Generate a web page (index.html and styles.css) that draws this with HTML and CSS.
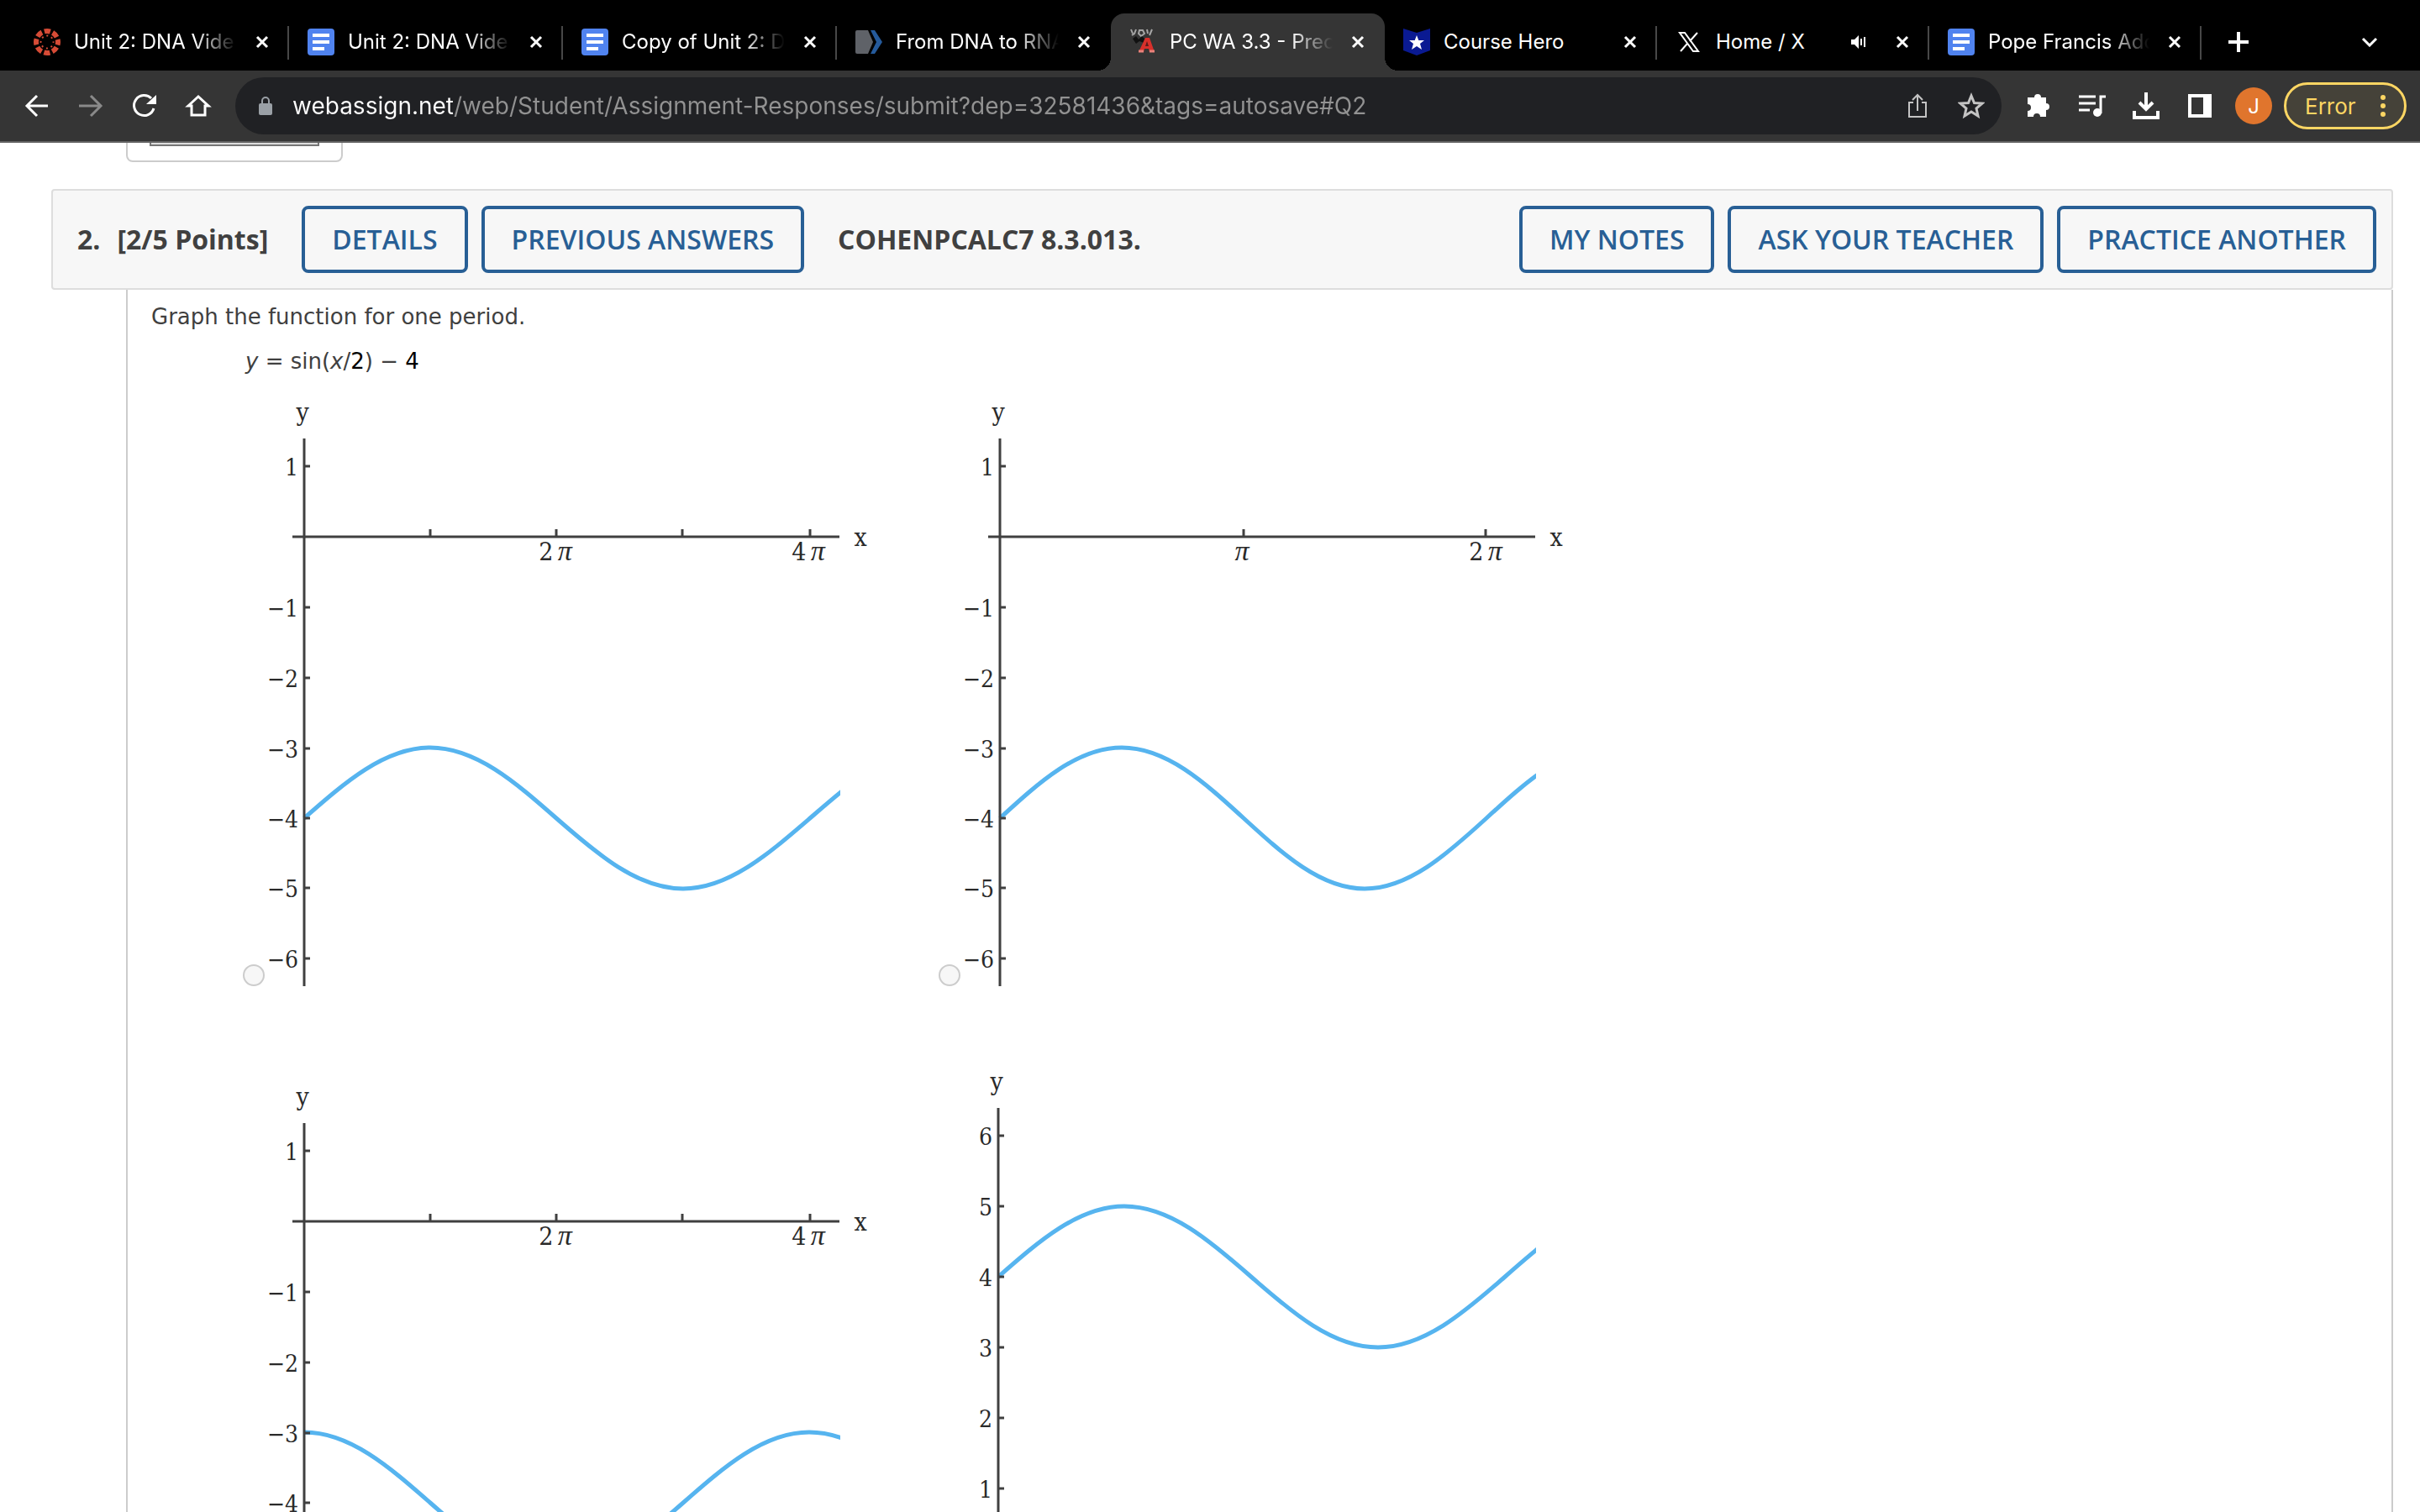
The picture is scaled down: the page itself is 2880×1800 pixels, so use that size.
FILE: index.html
```html
<!DOCTYPE html>
<html lang="en">
<head>
  <meta charset="UTF-8">
  <meta name="viewport" content="width=device-width, initial-scale=1.0">
  <title>PC WA 3.3 - Precalculus</title>
  <link rel="stylesheet" href="styles.css">
</head>
<body>
  <svg class="defs" aria-hidden="true">
    <symbol id="close" viewBox="0 0 16 16">
      <path d="M2 2L14 14M14 2L2 14" stroke="#fff" stroke-width="3" fill="none"/>
    </symbol>
    <symbol id="doc" viewBox="0 0 32 32">
      <rect width="32" height="32" rx="4" fill="#5083ef"/>
      <path d="M6 8H26M6 16H26M6 24H20" stroke="#fff" stroke-width="4"/>
    </symbol>
    <clipPath id="plotArea"><rect x="44" y="0" width="640" height="720"/></clipPath>
  </svg>

  <header class="browser">
    <nav class="tabs">
      <div class="tab">
        <svg class="favicon" viewBox="0 0 32 32">
          <circle cx="16" cy="16" r="13" fill="none" stroke="#d64b36" stroke-width="6" stroke-dasharray="7.2 3" stroke-dashoffset="3.6"/>
          <circle cx="16" cy="16" r="7.5" fill="none" stroke="#d64b36" stroke-width="2" stroke-dasharray="2 3.9" stroke-dashoffset="1"/>
        </svg>
        <span class="tab-title fade">Unit 2: DNA Vide</span>
        <button class="tab-close" aria-label="Close tab"><svg><use href="#close"/></svg></button>
      </div>
      <div class="tab">
        <svg class="favicon"><use href="#doc"/></svg>
        <span class="tab-title fade">Unit 2: DNA Vide</span>
        <button class="tab-close" aria-label="Close tab"><svg><use href="#close"/></svg></button>
      </div>
      <div class="tab">
        <svg class="favicon"><use href="#doc"/></svg>
        <span class="tab-title fade">Copy of Unit 2: D</span>
        <button class="tab-close" aria-label="Close tab"><svg><use href="#close"/></svg></button>
      </div>
      <div class="tab before-active">
        <svg class="favicon" viewBox="0 0 32 32">
          <path d="M2 2H15L21 16L15 30H2Q0 30 0 28V4Q0 2 2 2Z" fill="#5f6268"/>
          <path d="M18 2H23L32 16L23 30H18L25 16Z" fill="#255a9b"/>
        </svg>
        <span class="tab-title fade">From DNA to RNA</span>
        <button class="tab-close" aria-label="Close tab"><svg><use href="#close"/></svg></button>
      </div>
      <div class="tab active">
        <svg class="favicon" viewBox="0 0 32 32">
          <path d="M2 1L4 6M8 1L6 6L3 8M12 2H16L18 6L14 9L11 6ZM21 1L22 6M27 1L24 8" fill="none" stroke="#a5a5a5" stroke-width="2"/>
          <path d="M4 12L8 9L11 13L15 9L18 12L17 17L12 15L8 18Z" fill="#111"/>
          <path d="M11 28L19 11H24L30 28H24L23 24H18L17 28Z" fill="#d8302b"/>
          <path d="M19 21H23L21 15Z" fill="#5a1b1b"/>
          <path d="M11 27H17M24 27H30" stroke="#e8817a" stroke-width="3"/>
        </svg>
        <span class="tab-title fade">PC WA 3.3 - Prec</span>
        <button class="tab-close" aria-label="Close tab"><svg><use href="#close"/></svg></button>
      </div>
      <div class="tab">
        <svg class="favicon" viewBox="0 0 32 32">
          <path d="M0 0L16 5L32 0V26L16 32L0 26Z" fill="#0a1a92"/>
          <path d="M16 8L18.300 14H25L20 18L22 25L16 21L10 25L12 18L7 14H13.700Z" fill="#fff"/>
        </svg>
        <span class="tab-title">Course Hero</span>
        <button class="tab-close" aria-label="Close tab"><svg><use href="#close"/></svg></button>
      </div>
      <div class="tab">
        <svg class="favicon" viewBox="0 0 32 32" fill="none" stroke="#fff">
          <path d="M5 5H11L27 27H21Z" stroke-width="2"/>
          <path d="M26 5L17 15M14 18L6 27" stroke-width="2"/>
        </svg>
        <span class="tab-title">Home / X</span>
        <svg class="sound" viewBox="0 0 20 16">
          <path d="M1 5H5L10 0V16L5 11H1Z" fill="#fff"/>
          <path d="M13 4V12M17 2V14" stroke="#fff" stroke-width="2"/>
        </svg>
        <button class="tab-close" aria-label="Close tab"><svg><use href="#close"/></svg></button>
      </div>
      <div class="tab">
        <svg class="favicon"><use href="#doc"/></svg>
        <span class="tab-title fade">Pope Francis Add</span>
        <button class="tab-close" aria-label="Close tab"><svg><use href="#close"/></svg></button>
      </div>
      <button class="new-tab" aria-label="New tab">
        <svg viewBox="0 0 24 24"><path d="M12 0V24M0 12H24" stroke="#fff" stroke-width="4"/></svg>
      </button>
      <button class="tab-search" aria-label="Search tabs">
        <svg viewBox="0 0 20 12"><path d="M2 2L10 10L18 2" stroke="#fff" stroke-width="3" fill="none"/></svg>
      </button>
    </nav>

    <div class="toolbar">
      <button class="icon-btn" aria-label="Back">
        <svg viewBox="0 0 32 32" fill="none" stroke="#fff" stroke-width="3"><path d="M29 16H4M16 4L4 16L16 28"/></svg>
      </button>
      <button class="icon-btn" aria-label="Forward">
        <svg viewBox="0 0 32 32" fill="none" stroke="#8a8a8a" stroke-width="3"><path d="M2 16H27M16 4L28 16L16 28"/></svg>
      </button>
      <button class="icon-btn" aria-label="Reload">
        <svg viewBox="0 0 32 32"><path d="M27 19A12 12 0 1 1 24 7" fill="none" stroke="#fff" stroke-width="3"/><path d="M30 3V14H18Z" fill="#fff"/></svg>
      </button>
      <button class="icon-btn" aria-label="Home">
        <svg viewBox="0 0 32 32" fill="none" stroke="#fff" stroke-width="3"><path d="M4 16L16 5L28 16H24V27H8V16Z"/></svg>
      </button>

      <div class="address">
        <svg class="lock" viewBox="0 0 16 22">
          <rect y="8" width="16" height="14" rx="2" fill="#9aa0a6"/>
          <path d="M4 9V5A4 4 0 0 1 12 5V9" fill="none" stroke="#9aa0a6" stroke-width="2"/>
        </svg>
        <input class="url" type="text" aria-label="Address" value="webassign.net/web/Student/Assignment-Responses/submit?dep=32581436&amp;tags=autosave#Q2">
        <button class="icon-btn" aria-label="Share">
          <svg viewBox="0 0 32 32" fill="none" stroke="#c4c4c4" stroke-width="2"><path d="M11 12H6V29H26V12H21M16 22V4M10 9L16 3L22 9"/></svg>
        </button>
        <button class="icon-btn" aria-label="Bookmark this page">
          <svg viewBox="0 0 32 32" fill="none" stroke="#c4c4c4" stroke-width="3"><path d="M16 4L19.500 12.500L29 13L22 19L24 28L16 23L8 28L10 19L3 13L12.500 12.500Z"/></svg>
        </button>
      </div>

      <button class="icon-btn" aria-label="Extensions">
        <svg viewBox="0 0 32 32" fill="#fff"><path d="M4 6H11A4 4 0 0 1 19 6H25V13A4 4 0 0 1 25 21V29H18A4 4 0 0 0 10 29H3V22A4 4 0 0 0 3 14V6Z"/></svg>
      </button>
      <button class="icon-btn" aria-label="Media control">
        <svg viewBox="0 0 32 32"><path d="M0 5H20M0 13H20M0 21H13M26 25V5H32" fill="none" stroke="#fff" stroke-width="3"/><circle cx="22" cy="24" r="5" fill="#fff"/></svg>
      </button>
      <button class="icon-btn" aria-label="Downloads">
        <svg viewBox="0 0 32 32" fill="none" stroke="#fff" stroke-width="4"><path d="M16 0V20M8 12L16 20L24 12M2 22V30H30V22"/></svg>
      </button>
      <button class="icon-btn" aria-label="Side panel">
        <svg viewBox="0 0 32 32"><path d="M2 2H30V30H2ZM6 6V26H20V6Z" fill="#fff" fill-rule="evenodd"/></svg>
      </button>
      <button class="avatar">J</button>
      <button class="error">Error
        <svg viewBox="0 0 6 28" fill="#fdd663"><circle cx="3" cy="4" r="3"/><circle cx="3" cy="14" r="3"/><circle cx="3" cy="24" r="3"/></svg>
      </button>
    </div>
  </header>

  <main class="page">
    <div class="previous"><div class="previous-btn"></div></div>

    <section class="question">
      <div class="question-header">
        <h2 class="points"><span>2.</span><span>[2/5 Points]</span></h2>
        <button class="btn">DETAILS</button>
        <button class="btn">PREVIOUS ANSWERS</button>
        <h3 class="source">COHENPCALC7 8.3.013.</h3>
        <button class="btn">MY NOTES</button>
        <button class="btn">ASK YOUR TEACHER</button>
        <button class="btn">PRACTICE ANOTHER</button>
      </div>

      <div class="question-body">
        <p class="prompt">Graph the function for one period.</p>
        <p class="equation"><i>y</i> = sin(<i>x</i>/<b>2</b>) − <b>4</b></p>

        <div class="options">
          <label class="option">
            <input type="radio" name="graph" aria-label="Graph 1">
            <svg class="graph" width="724" height="698" viewBox="0 0 724 698">
              <path class="curve" clip-path="url(#plotArea)" d="M46 498C95 455 142 414 196 414S297 455 346 498S443 582 497 582S598 541 648 498S744 414 798 414"/>
              <path class="axis" d="M46 46V698M32 163H683M196 154V163M346 154V163M496 154V163M648 154V163M46 79H53M46 247H53M46 331H53M46 415H53M46 498H53M46 581H53M46 665H53"/>
              <g class="names"><text x="44" y="25">y</text><text x="708" y="174">x</text><text x="345" y="191">2&#8201;<tspan>π</tspan></text><text x="646" y="191">4&#8201;<tspan>π</tspan></text></g>
              <g class="values"><text x="39" y="90">1</text><text x="39" y="258">−1</text><text x="39" y="342">−2</text><text x="39" y="426">−3</text><text x="39" y="509">−4</text><text x="39" y="592">−5</text><text x="39" y="676">−6</text></g>
            </svg>
          </label>

          <label class="option">
            <input type="radio" name="graph" aria-label="Graph 2">
            <svg class="graph" width="724" height="698" viewBox="0 0 724 698">
              <path class="curve" clip-path="url(#plotArea)" d="M46 498C93 455 138 414 191 414S289 455 336 498S428 582 480 582S578 541 625 498S717 414 769 414"/>
              <path class="axis" d="M46 46V698M32 163H683M336 154V163M624 154V163M46 79H53M46 247H53M46 331H53M46 415H53M46 498H53M46 581H53M46 665H53"/>
              <g class="names"><text x="44" y="25">y</text><text x="708" y="174">x</text><text x="334" y="191"><tspan>π</tspan></text><text x="624" y="191">2&#8201;<tspan>π</tspan></text></g>
              <g class="values"><text x="39" y="90">1</text><text x="39" y="258">−1</text><text x="39" y="342">−2</text><text x="39" y="426">−3</text><text x="39" y="509">−4</text><text x="39" y="592">−5</text><text x="39" y="676">−6</text></g>
            </svg>
          </label>

          <label class="option">
            <input type="radio" name="graph" aria-label="Graph 3">
            <svg class="graph" width="724" height="698" viewBox="0 0 724 698">
              <path class="curve" clip-path="url(#plotArea)" d="M46 414C100 414 147 455 196 498S292 582 346 582S448 541 497 498S593 414 647 414S749 455 798 498"/>
              <path class="axis" d="M46 46V698M32 163H683M196 154V163M346 154V163M496 154V163M648 154V163M46 79H53M46 247H53M46 331H53M46 415H53M46 498H53M46 581H53M46 665H53"/>
              <g class="names"><text x="44" y="25">y</text><text x="708" y="174">x</text><text x="345" y="191">2&#8201;<tspan>π</tspan></text><text x="646" y="191">4&#8201;<tspan>π</tspan></text></g>
              <g class="values"><text x="39" y="90">1</text><text x="39" y="258">−1</text><text x="39" y="342">−2</text><text x="39" y="426">−3</text><text x="39" y="509">−4</text><text x="39" y="592">−5</text><text x="39" y="676">−6</text></g>
            </svg>
          </label>

          <label class="option">
            <input type="radio" name="graph" aria-label="Graph 4">
            <svg class="graph" width="724" height="716" viewBox="0 0 724 716">
              <path class="curve" clip-path="url(#plotArea)" d="M44 247C93 204 140 163 194 163S296 204 345 247S442 331 496 331S598 290 647 247S743 163 797 163"/>
              <path class="axis" d="M44 46V698M30 583H683M44 79H51M44 163H51M44 247H51M44 331H51M44 415H51M44 499H51"/>
              <g class="names"><text x="42" y="25">y</text></g>
              <g class="values"><text x="37" y="90">6</text><text x="37" y="174">5</text><text x="37" y="258">4</text><text x="37" y="342">3</text><text x="37" y="426">2</text><text x="37" y="510">1</text></g>
            </svg>
          </label>
        </div>
      </div>
    </section>
  </main>
</body>
</html>
```
FILE: styles.css
```css
* {
  box-sizing: border-box;
}

body {
  margin: 0;
  height: 100vh;
  display: flex;
  flex-direction: column;
  overflow: hidden;
  background-color: #fff;
  font-family: "DejaVu Sans", Verdana, sans-serif;
  color: #404040;
}

button {
  margin: 0;
  padding: 0;
  border: none;
  background: none;
  font-family: inherit;
  cursor: pointer;
}

svg {
  display: block;
  flex: none;
}

.defs {
  position: absolute;
  width: 0;
  height: 0;
}

/* browser */
.browser {
  flex: none;
  background-color: #353535;
  border-bottom: 2px solid #636363;
  font-family: Inter, Roboto, sans-serif;
  color: #fff;
}

.tabs {
  display: grid;
  grid-template-columns: repeat(5, 326px) repeat(3, 324px) 88px 1fr;
  align-items: center;
  height: 84px;
  padding: 16px 50px 0 18px;
  background-color: #000;
}

.tab {
  position: relative;
  display: flex;
  align-items: center;
  gap: 16px;
  height: 68px;
  padding: 0 24px 0 22px;
  font-size: 24px;
}

.tab::after {
  content: "";
  position: absolute;
  right: 0;
  top: 15px;
  width: 2px;
  height: 40px;
  background-color: #484848;
}

.tab.active {
  background-color: #353535;
  border-radius: 16px 16px 0 0;
}

.tab.active::after,
.tab.before-active::after {
  display: none;
}

/* flared feet of the active tab */
.tab.active::before {
  content: "";
  position: absolute;
  left: -16px;
  right: -16px;
  bottom: 0;
  height: 16px;
  background:
    radial-gradient(circle at 0 0, transparent 16px, #353535 16px) left / 16px 16px no-repeat,
    radial-gradient(circle at 16px 0, transparent 16px, #353535 16px) right / 16px 16px no-repeat;
}

.favicon {
  width: 32px;
  height: 32px;
}

.tab-title {
  flex: 1;
  min-width: 0;
  white-space: nowrap;
  line-height: 32px;
}

.tab-title.fade {
  -webkit-mask-image: linear-gradient(to right, #000 72%, transparent 97%);
  mask-image: linear-gradient(to right, #000 72%, transparent 97%);
}

.tab-close svg {
  width: 16px;
  height: 16px;
}

.sound {
  width: 20px;
  height: 16px;
  margin-right: 18px;
}

.new-tab {
  justify-self: center;
}

.new-tab svg {
  width: 24px;
  height: 24px;
}

.tab-search {
  justify-self: end;
}

.tab-search svg {
  width: 20px;
  height: 12px;
}

.toolbar {
  display: flex;
  align-items: center;
  gap: 32px;
  height: 84px;
  padding: 0 16px 0 28px;
}

.icon-btn svg {
  width: 32px;
  height: 32px;
}

.address {
  flex: 1;
  display: flex;
  align-items: center;
  gap: 32px;
  height: 68px;
  margin-right: -4px;
  margin-left: -4px;
  padding: 0 20px 0 28px;
  border-radius: 34px;
  background-color: #202124;
}

.lock {
  width: 16px;
  height: 22px;
  margin-right: -8px;
}

.url {
  flex: 1;
  padding: 0;
  border: none;
  outline: none;
  font-family: inherit;
  font-size: 28px;
  line-height: 40px;
  background: linear-gradient(to right, #fff 191px, #929292 191px);
  -webkit-background-clip: text;
  background-clip: text;
  -webkit-text-fill-color: transparent;
}

.avatar {
  width: 44px;
  height: 44px;
  margin-left: -6px;
  border-radius: 50%;
  background-color: #e0752d;
  color: #fff;
  font-size: 24px;
}

.error {
  display: flex;
  align-items: center;
  justify-content: space-between;
  width: 146px;
  height: 56px;
  margin-left: -18px;
  padding: 0 22px;
  border: 3px solid #fdd663;
  border-radius: 28px;
  background-color: #454239;
  color: #fdd663;
  font-size: 26px;
}

.error svg {
  width: 6px;
  height: 28px;
}

/* page */
.page {
  flex: 1;
  overflow: hidden;
  padding: 0 32px 0 61px;
}

.previous {
  width: 258px;
  height: 23px;
  margin: 0 0 32px 89px;
  padding: 0 26px;
  border: 2px solid #ccc;
  border-top: none;
  border-radius: 0 0 8px 8px;
}

.previous-btn {
  height: 4px;
  background-color: #ddd;
  border: 2px solid #767676;
  border-top: none;
}

.question-header {
  display: flex;
  align-items: center;
  gap: 16px;
  height: 120px;
  padding: 0 18px 0 29px;
  border: 2px solid #ddd;
  border-radius: 4px;
  background-color: #f7f7f7;
  font-family: "Open Sans", sans-serif;
}

.points {
  display: flex;
  gap: 20px;
  margin: 0 24px 0 0;
  padding-bottom: 2px;
  font-size: 32px;
}

.source {
  flex: 1;
  margin: 0 0 0 24px;
  padding-bottom: 2px;
  font-size: 32px;
}

.btn {
  height: 80px;
  padding: 0 32px 2px;
  border: 4px solid #285f95;
  border-radius: 8px;
  color: #285f95;
  font-size: 32px;
  font-weight: 600;
  white-space: nowrap;
}

.btn:hover {
  background-color: #e8eff6;
}

.question-body {
  margin-left: 89px;
  padding: 12px 28px;
  border: 2px solid #ccc;
  border-top: none;
  font-size: 26px;
  line-height: 40px;
}

.prompt {
  margin: 0;
}

.equation {
  margin: 13px 0 26px 112px;
}

.equation b {
  color: #000;
  font-weight: normal;
}

.options {
  display: grid;
  grid-template-columns: 828px 828px;
  row-gap: 99px;
  margin-left: 109px;
}

.option {
  display: flex;
  align-items: flex-end;
  gap: 1px;
}

.option input {
  appearance: none;
  flex: none;
  width: 26px;
  height: 26px;
  margin: 0;
  border: 2px solid #ccc;
  border-radius: 50%;
  background-color: #f7f7f7;
}

.option input:checked {
  background-color: #285f95;
}

.curve {
  fill: none;
  stroke: #56b4ef;
  stroke-width: 5;
}

.axis {
  fill: none;
  stroke: #404040;
  stroke-width: 3;
}

.graph {
  overflow: visible;
  font-family: "DejaVu Serif Condensed", "DejaVu Serif", serif;
  fill: #2a2a2a;
}

.names {
  font-size: 30px;
  text-anchor: middle;
}

.names tspan {
  font-family: "Liberation Serif", serif;
  font-size: 34px;
  font-style: italic;
}

.values {
  font-size: 28px;
  text-anchor: end;
}
```
